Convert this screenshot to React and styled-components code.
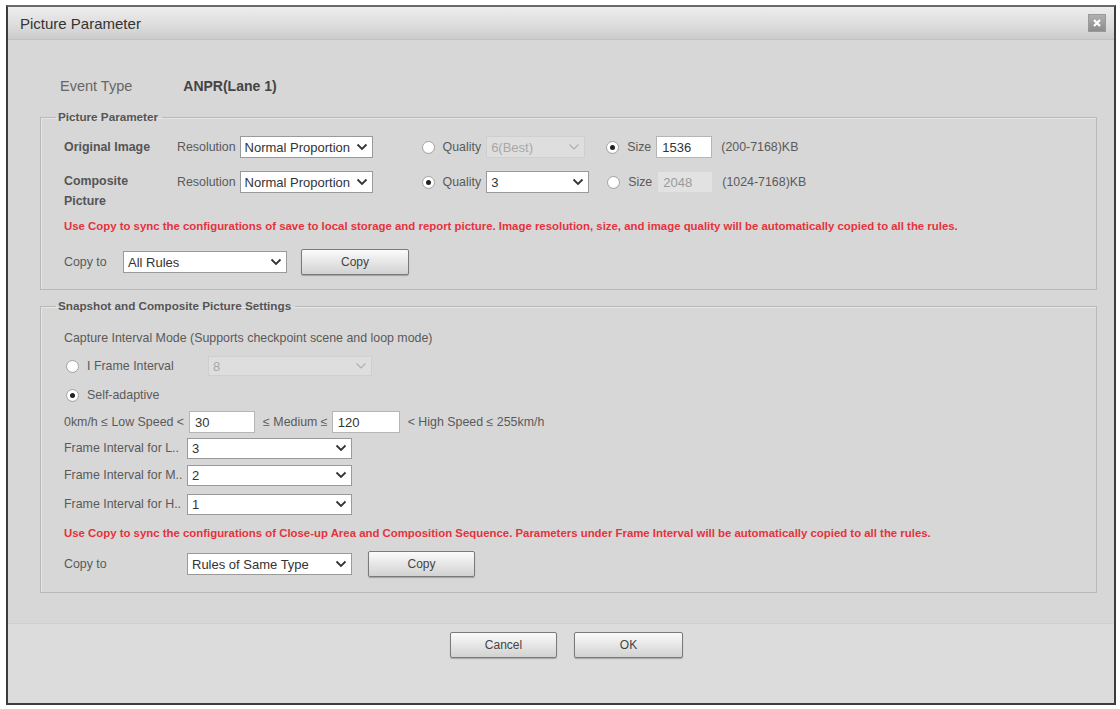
import React from "react";
import styled, { createGlobalStyle } from "styled-components";

const GlobalStyle = createGlobalStyle`
    html, body {
        margin: 0;
        padding: 0;
        background: #ffffff;
    }
    body {
        font-family: "Liberation Sans", Arial, sans-serif;
        font-size: 12px;
        color: #555;
    }
`;

const Page = styled.div`
    width: 1120px;
    height: 709px;
    padding: 5px 0 0 6px;
    box-sizing: border-box;
`;

// dialog frame
const Dialog = styled.div`
    width: 1110px;
    height: 700px;
    box-sizing: border-box;
    border: 2px solid #3c3c3c;
    border-top-color: #6a6a6a;
    display: flex;
    flex-direction: column;
    background: #d7d7d7;
`;

const TitleBar = styled.div`
    height: 32px;
    flex: none;
    display: flex;
    align-items: center;
    justify-content: space-between;
    padding: 0 8px 0 12px;
    background: linear-gradient(#ededed, #dcdcdc 60%, #cbcbcb);
    border-bottom: 1px solid #c2c2c2;
    font-size: 15px;
    color: #333;
`;

const CloseBox = styled.div`
    width: 16px;
    height: 16px;
    background: linear-gradient(#b0b0b0, #8c8c8c);
    border: 1px solid #9a9a9a;
    display: flex;
    align-items: center;
    justify-content: center;
`;

const Body = styled.div`
    flex: none;
    height: 583px;
    box-sizing: border-box;
    padding: 37px 17px 0 32px;
    display: flex;
    flex-direction: column;
`;

const EventRow = styled.div`
    display: flex;
    align-items: center;
    height: 18px;
    padding-left: 20px;
    font-size: 14.5px;
    color: #666;
`;

const EventValue = styled.span`
    margin-left: 51px;
    font-weight: bold;
    color: #444;
    font-size: 14px;
`;

const Group = styled.fieldset`
    margin: ${(p) => p.$top}px 0 0 0;
    padding: 0 0 ${(p) => p.$bottom}px 23px;
    border: 1px solid #b9b9b9;
    box-shadow: inset 1px 1px 0 #e6e6e6;
    display: flex;
    flex-direction: column;
    min-width: 0;
`;

const Legend = styled.legend`
    margin-left: -8px;
    padding: 0 4px 0 2px;
    line-height: 14px;
    font-size: 11.7px;
    font-weight: bold;
    color: #555;
`;

const Row = styled.div`
    display: flex;
    align-items: ${(p) => (p.$top ? "flex-start" : "center")};
    height: ${(p) => (p.$h ? `${p.$h}px` : "auto")};
    margin-top: ${(p) => p.$mt || 0}px;
    flex: none;
`;

const Cell = styled.div`
    width: ${(p) => p.$w}px;
    margin-right: ${(p) => p.$mr || 0}px;
    flex: none;
    font-size: 12.4px;
    font-weight: ${(p) => (p.$bold ? "bold" : "normal")};
    color: ${(p) => (p.$bold ? "#555" : "#5a5a5a")};
    line-height: ${(p) => p.$lh || 16}px;
    white-space: ${(p) => (p.$wrap ? "normal" : "nowrap")};
    overflow: hidden;
`;

const Text = styled.span`
    font-size: 12.4px;
    color: #5a5a5a;
    white-space: nowrap;
    margin-left: ${(p) => p.$ml || 0}px;
    margin-right: ${(p) => p.$mr || 0}px;
`;

const Warn = styled.div`
    margin-top: ${(p) => p.$mt}px;
    line-height: 16px;
    height: 16px;
    font-size: 11.4px;
    font-weight: bold;
    color: #e6323c;
    white-space: nowrap;
    flex: none;
`;

const SelectBox = styled.div`
    width: ${(p) => p.$w}px;
    height: ${(p) => p.$h || 21}px;
    flex: none;
    box-sizing: border-box;
    display: flex;
    align-items: center;
    gap: 2px;
    padding: 0 4px 0 4px;
    background: ${(p) => (p.$disabled ? "#dedede" : "#ffffff")};
    border: 1px solid ${(p) => (p.$disabled ? "#cfcfcf" : "#9a9a9a")};
    color: ${(p) => (p.$disabled ? "#a8a8a8" : "#333")};
    font-size: 13px;
`;

const SelectValue = styled.span`
    flex: 1;
    min-width: 0;
    white-space: nowrap;
    overflow: hidden;
`;

const InputBox = styled.div`
    width: ${(p) => p.$w}px;
    height: 22px;
    flex: none;
    box-sizing: border-box;
    display: flex;
    align-items: center;
    padding-left: 5px;
    background: ${(p) => (p.$disabled ? "#e2e2e2" : "#ffffff")};
    border: 1px solid ${(p) => (p.$disabled ? "#d6d6d6" : "#b5b5b5")};
    color: ${(p) => (p.$disabled ? "#9a9a9a" : "#333")};
    font-size: 13px;
`;

const Radio = styled.span`
    width: 13px;
    height: 13px;
    flex: none;
    box-sizing: border-box;
    border-radius: 50%;
    border: 1px solid #a5a5a5;
    background: radial-gradient(circle at 50% 40%, #ffffff 55%, #e6e6e6);
    display: inline-flex;
    align-items: center;
    justify-content: center;
    margin-left: ${(p) => p.$ml || 0}px;
    margin-right: ${(p) => p.$mr || 6}px;

    &::after {
        content: "";
        width: 5px;
        height: 5px;
        border-radius: 50%;
        background: ${(p) => (p.$on ? "#222" : "transparent")};
    }
`;

const Button = styled.button`
    width: ${(p) => p.$w}px;
    height: 26px;
    flex: none;
    margin-left: ${(p) => p.$ml || 0}px;
    border: 1px solid #7a7a7a;
    border-radius: 2px;
    background: linear-gradient(#fbfbfb, #e4e4e4 55%, #d2d2d2);
    box-shadow: 0 1px 1px rgba(0, 0, 0, 0.25);
    font-family: "Liberation Sans", Arial, sans-serif;
    font-size: 12px;
    color: #444;
    padding: 0;
`;

const Footer = styled.div`
    flex: 1;
    background: #dcdcdc;
    border-top: 1px solid #d0d0d0;
    display: flex;
    justify-content: center;
    padding: 8px 0 0 11px;
    gap: 17px;
`;

const Chevron = ({ disabled }) => (
    <svg width="12" height="8" viewBox="0 0 12 8" style={{ flex: "none" }}>
        <polyline
            points="1.5,1.5 6,6 10.5,1.5"
            fill="none"
            stroke={disabled ? "#b0b0b0" : "#333"}
            strokeWidth={disabled ? 1.2 : 1.8}
        />
    </svg>
);

const Select = ({ value, w, h, disabled }) => (
    <SelectBox $w={w} $h={h} $disabled={disabled}>
        <SelectValue>{value}</SelectValue>
        <Chevron disabled={disabled} />
    </SelectBox>
);

const App = () => {
    return (
        <Page>
            <GlobalStyle />
            <Dialog>
                <TitleBar>
                    <span>Picture Parameter</span>
                    <CloseBox>
                        <svg width="10" height="10" viewBox="0 0 10 10">
                            <path d="M2 2L8 8M8 2L2 8" stroke="#fff" strokeWidth="2.2" />
                        </svg>
                    </CloseBox>
                </TitleBar>
                <Body>
                    <EventRow>
                        <span>Event Type</span>
                        <EventValue>ANPR(Lane 1)</EventValue>
                    </EventRow>

                    <Group $top={15} $bottom={14}>
                        <Legend>Picture Parameter</Legend>
                        <Row $h={22} $mt={12}>
                            <Cell $w={113} $bold>Original Image</Cell>
                            <Text $mr={4}>Resolution</Text>
                            <Select value="Normal Proportion" w={133} h={22} />
                            <Radio $ml={49} $mr={8} />
                            <Text $mr={5}>Quality</Text>
                            <Select value="6(Best)" w={99} h={22} disabled />
                            <Radio $ml={21} $mr={8} $on />
                            <Text $mr={5}>Size</Text>
                            <InputBox $w={56}>1536</InputBox>
                            <Text $ml={9}>(200-7168)KB</Text>
                        </Row>
                        <Row $top $mt={13}>
                            <Cell $w={80} $mr={33} $bold $lh={20} $wrap>
                                Composite Picture
                            </Cell>
                            <Row $h={22}>
                                <Text $mr={4}>Resolution</Text>
                                <Select value="Normal Proportion" w={133} h={22} />
                                <Radio $ml={49} $mr={8} $on />
                                <Text $mr={5}>Quality</Text>
                                <Select value="3" w={103} h={22} />
                                <Radio $ml={18} $mr={8} />
                                <Text $mr={5}>Size</Text>
                                <InputBox $w={56} $disabled>2048</InputBox>
                                <Text $ml={9}>(1024-7168)KB</Text>
                            </Row>
                        </Row>
                        <Warn $mt={7}>
                            Use Copy to sync the configurations of save to local storage and report picture. Image resolution, size, and image quality will be automatically copied to all the rules.
                        </Warn>
                        <Row $h={26} $mt={15}>
                            <Cell $w={59}>Copy to</Cell>
                            <Select value="All Rules" w={164} h={22} />
                            <Button $w={108} $ml={14}>Copy</Button>
                        </Row>
                    </Group>

                    <Group $top={9} $bottom={15}>
                        <Legend>Snapshot and Composite Picture Settings</Legend>
                        <Row $h={16} $mt={17}>
                            <Text>Capture Interval Mode (Supports checkpoint scene and loop mode)</Text>
                        </Row>
                        <Row $h={20} $mt={10}>
                            <Radio $ml={2} $mr={8} />
                            <Cell $w={121}>I Frame Interval</Cell>
                            <Select value="8" w={164} h={20} disabled />
                        </Row>
                        <Row $h={20} $mt={9}>
                            <Radio $ml={2} $mr={8} $on />
                            <Text>Self-adaptive</Text>
                        </Row>
                        <Row $h={22} $mt={6}>
                            <Text $mr={5}>0km/h ≤ Low Speed &lt;</Text>
                            <InputBox $w={66}>30</InputBox>
                            <Text $ml={8} $mr={4}>≤ Medium ≤</Text>
                            <InputBox $w={68}>120</InputBox>
                            <Text $ml={8}>&lt; High Speed ≤ 255km/h</Text>
                        </Row>
                        <Row $h={22} $mt={4}>
                            <Cell $w={123}>Frame Interval for L..</Cell>
                            <Select value="3" w={165} h={21} />
                        </Row>
                        <Row $h={22} $mt={5}>
                            <Cell $w={123}>Frame Interval for M..</Cell>
                            <Select value="2" w={165} h={21} />
                        </Row>
                        <Row $h={22} $mt={7}>
                            <Cell $w={123}>Frame Interval for H..</Cell>
                            <Select value="1" w={165} h={21} />
                        </Row>
                        <Warn $mt={10}>
                            Use Copy to sync the configurations of Close-up Area and Composition Sequence. Parameters under Frame Interval will be automatically copied to all the rules.
                        </Warn>
                        <Row $h={26} $mt={10}>
                            <Cell $w={123}>Copy to</Cell>
                            <Select value="Rules of Same Type" w={165} h={22} />
                            <Button $w={107} $ml={16}>Copy</Button>
                        </Row>
                    </Group>
                </Body>
                <Footer>
                    <Button $w={107}>Cancel</Button>
                    <Button $w={109}>OK</Button>
                </Footer>
            </Dialog>
        </Page>
    );
};

export default App;
